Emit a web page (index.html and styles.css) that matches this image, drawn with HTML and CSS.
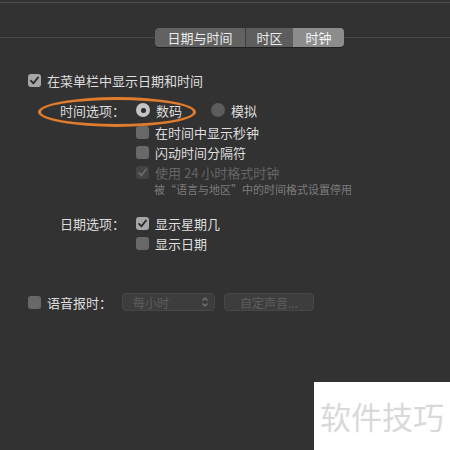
FILE: index.html
```html
<!DOCTYPE html>
<html>
<head>
<meta charset="utf-8">
<link rel="stylesheet" href="styles.css">
</head>
<body>
<div class="topline"></div>
<div class="tabbar">
  <div class="rule"></div>
  <div class="seg">
    <span class="s s1">日期与时间</span>
    <span class="s s2">时区</span>
    <span class="s s3">时钟</span>
  </div>
  <div class="rule"></div>
</div>

<div class="content">
  <div class="row r-main">
    <span class="cb on"><svg viewBox="0 0 13 13"><path d="M3 6.8 L5.5 9.3 L10 3.5" /></svg></span>
    <span class="txt">在菜单栏中显示日期和时间</span>
  </div>

  <div class="frow r-time">
    <span class="label">时间选项：</span>
    <span class="rd on"></span><span class="txt">数码</span>
    <span class="rd second"></span><span class="txt">模拟</span>
    <div class="ellipse"></div>
  </div>
  <div class="frow r-sec">
    <span class="label"></span>
    <span class="cb"></span><span class="txt">在时间中显示秒钟</span>
  </div>
  <div class="frow r-flash">
    <span class="label"></span>
    <span class="cb"></span><span class="txt">闪动时间分隔符</span>
  </div>
  <div class="frow r-24">
    <span class="label"></span>
    <span class="cb dis"><svg viewBox="0 0 13 13"><path d="M3 6.8 L5.5 9.3 L10 3.5" /></svg></span><span class="txt dim">使用 24 小时格式时钟</span>
  </div>
  <div class="frow r-note">
    <span class="label"></span>
    <span class="note">被“语言与地区”中的时间格式设置停用</span>
  </div>

  <div class="frow r-date">
    <span class="label">日期选项：</span>
    <span class="cb on"><svg viewBox="0 0 13 13"><path d="M3 6.8 L5.5 9.3 L10 3.5" /></svg></span><span class="txt">显示星期几</span>
  </div>
  <div class="frow r-date2">
    <span class="label"></span>
    <span class="cb"></span><span class="txt">显示日期</span>
  </div>

  <div class="row r-voice">
    <span class="cb"></span>
    <span class="txt">语音报时：</span>
    <span class="popup">每小时<svg class="chev" viewBox="0 0 8 12"><path d="M1.5 4.5 L4 2 L6.5 4.5 M1.5 7.5 L4 10 L6.5 7.5"/></svg></span>
    <span class="btn">自定声音...</span>
  </div>
</div>

<div class="watermark">软件技巧</div>
</body>
</html>
```
FILE: styles.css
```css
html, body {
  margin: 0;
  padding: 0;
}
body {
  width: 450px;
  height: 450px;
  overflow: hidden;
  background: #323232;
  font-family: "Noto Sans CJK SC", "Noto Sans", sans-serif;
  font-size: 13px;
  color: #dedede;
  position: relative;
}
.topline {
  margin-top: 2px;
  height: 1px;
  background: #4c4c4c;
}
.tabbar {
  margin-top: 25px;
  display: grid;
  grid-template-columns: 155px auto 1fr;
  align-items: center;
  height: 19px;
}
.rule {
  height: 1px;
  background: #4a4a4a;
}
.seg {
  display: flex;
  height: 19px;
  border-radius: 4px;
  overflow: hidden;
  box-shadow: 0 0.5px 1px rgba(0,0,0,0.4);
}
.s {
  display: flex;
  align-items: center;
  justify-content: center;
  color: #ececec;
  font-size: 13px;
  line-height: 19px;
}
.s1 { width: 90px; background: #626262; border-right: 1px solid #3e3e3e; }
.s2 { width: 47px; background: #5d5d5d; }
.s3 { width: 51px; background: #8c8c8c; color: #f6f6f6; }

.content {
  position: relative;
}
.row, .frow {
  display: flex;
  align-items: center;
  height: 20px;
  position: relative;
}
.row { padding-left: 28px; }
.r-main { margin-top: 23px; }
.r-time { margin-top: 10px; }
.r-sec { margin-top: 2px; }
.r-flash { margin-top: 0; }
.r-24 { margin-top: 0; }
.r-note { height: 16px; margin-top: -1px; }
.r-date { margin-top: 16px; }
.r-date2 { margin-top: 0; }
.r-voice { margin-top: 39px; }

.label {
  width: 125px;
  text-align: right;
  flex: none;
  margin-right: 11px;
  color: #dcdcdc;
}
.txt { margin-left: 6px; white-space: nowrap; }
.dim { color: #666666; }
.note {
  font-size: 11px;
  color: #7c7c7c;
  margin-left: 18px;
  white-space: nowrap;
}

.cb {
  width: 13px;
  height: 13px;
  border-radius: 3px;
  background: #686868;
  flex: none;
  display: inline-flex;
}
.cb.on { background: #a6a6a6; }
.cb.dis { background: #444444; }
.cb svg { width: 13px; height: 13px; }
.cb svg path {
  fill: none;
  stroke: #262626;
  stroke-width: 1.8;
  stroke-linecap: round;
  stroke-linejoin: round;
}
.cb.dis svg path { stroke: #6a6a6a; }

.rd {
  width: 14px;
  height: 14px;
  border-radius: 50%;
  background: #5c5c5c;
  flex: none;
  position: relative;
}
.rd.on { background: #c4c4c4; }
.rd.on::after {
  content: "";
  position: absolute;
  left: 4.5px;
  top: 4.5px;
  width: 5px;
  height: 5px;
  border-radius: 50%;
  background: #2a2a2a;
}
.rd.second { margin-left: 29px; }

.ellipse {
  position: absolute;
  left: 38px;
  top: -3px;
  width: 152px;
  height: 24px;
  border: 3px solid #e07c2c;
  border-radius: 50%;
}

.popup {
  margin-left: 10px;
  width: 93px;
  height: 18px;
  box-sizing: border-box;
  background: #3d3d3d;
  border: 1px solid #474747;
  border-radius: 4px;
  color: #5e5e5e;
  padding-left: 10px;
  display: flex;
  align-items: center;
  justify-content: space-between;
  padding-right: 5px;
  font-size: 12px;
}
.chev { width: 8px; height: 12px; }
.chev path { fill: none; stroke: #777; stroke-width: 1.2; }
.btn {
  margin-left: 9px;
  width: 90px;
  height: 18px;
  box-sizing: border-box;
  background: #3d3d3d;
  border: 1px solid #474747;
  border-radius: 4px;
  color: #5e5e5e;
  display: flex;
  align-items: center;
  justify-content: center;
  font-size: 12px;
}

.watermark {
  position: absolute;
  left: 314px;
  top: 382px;
  width: 136px;
  height: 68px;
  background: #ffffff;
  color: #d9d9d9;
  font-size: 31px;
  line-height: 68px;
  text-align: center;
  white-space: nowrap;
  font-family: "Noto Sans CJK SC", sans-serif;
}
```
